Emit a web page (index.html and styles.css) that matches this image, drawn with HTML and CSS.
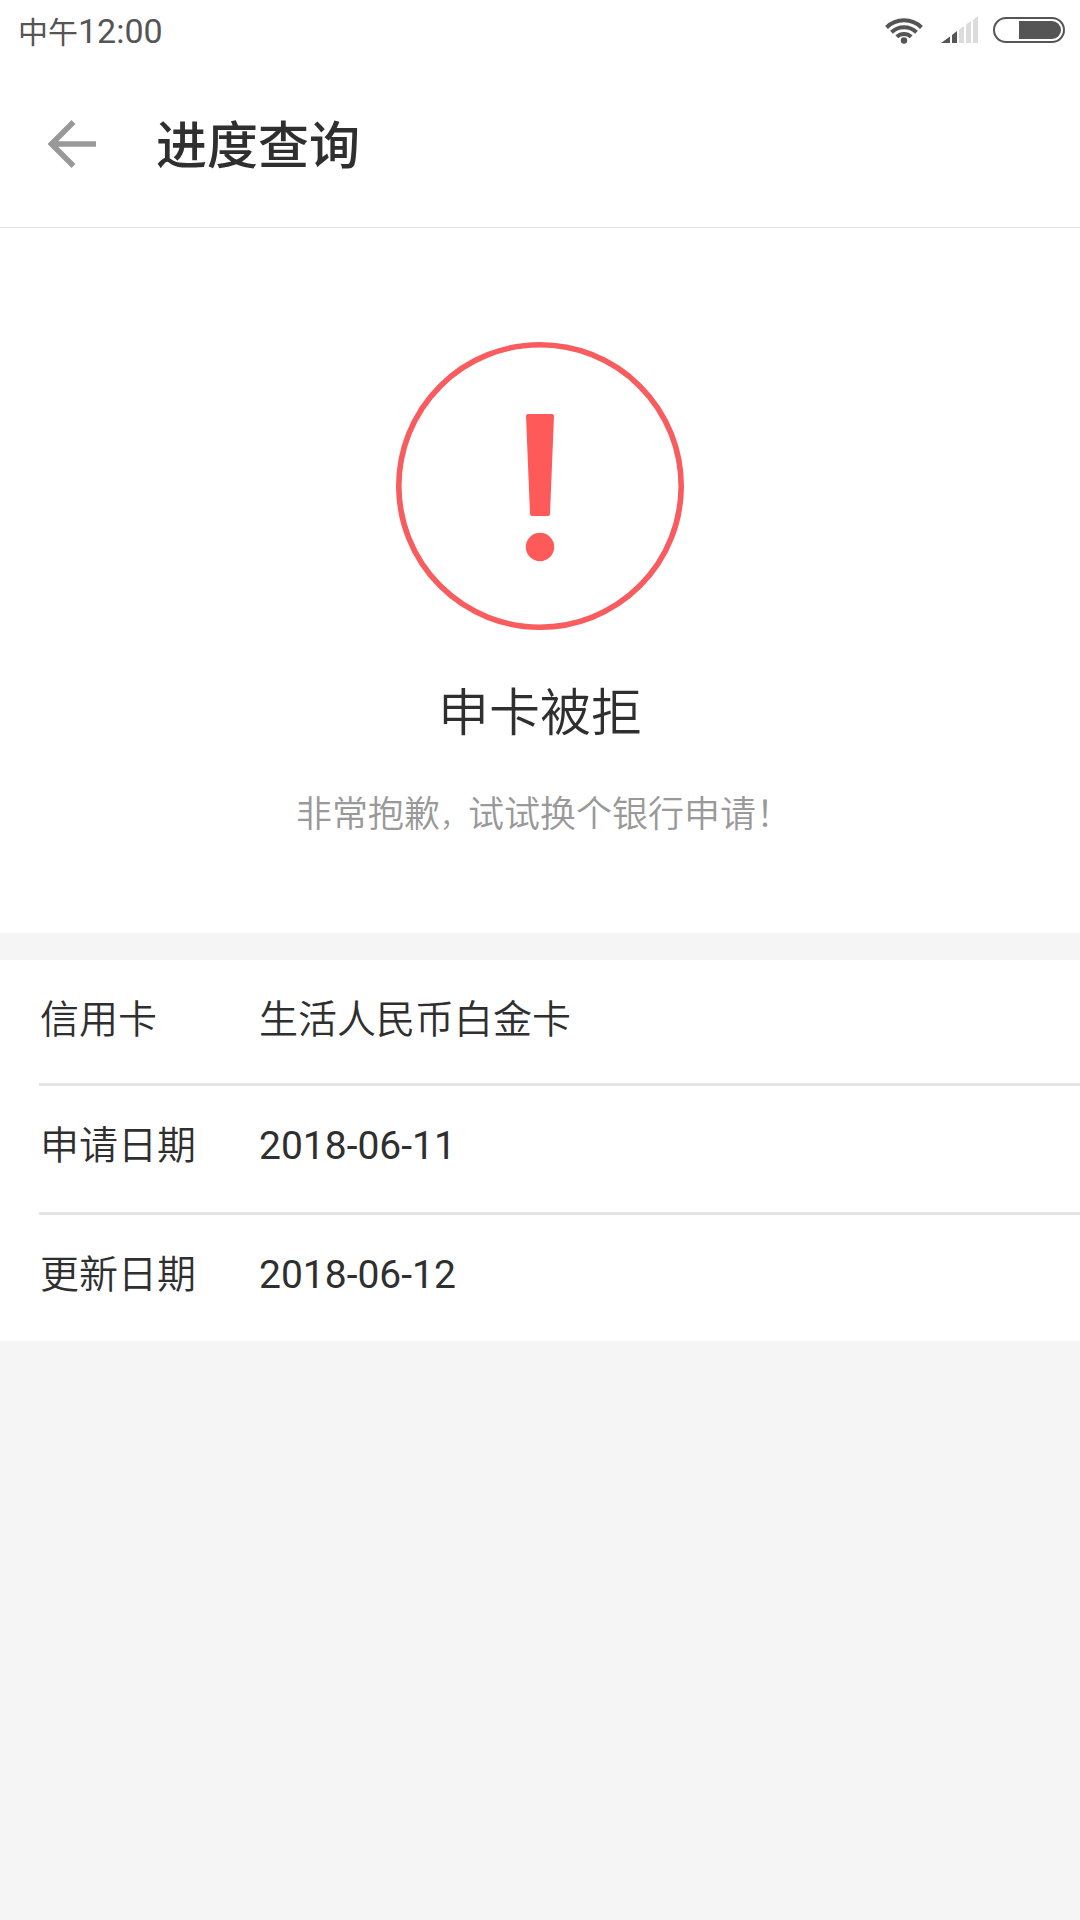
FILE: index.html
```html
<!DOCTYPE html>
<html lang="zh-CN">
<head>
<meta charset="utf-8">
<meta name="viewport" content="width=device-width, initial-scale=1">
<title>进度查询</title>
<link rel="stylesheet" href="styles.css">
</head>
<body>
<div class="status-bar">
  <div class="clock">中午<span class="clock-time">12:00</span></div>
  <div class="status-icons">
    <svg class="icon-wifi" viewBox="0 0 42 28" aria-hidden="true">
      <g fill="none" stroke="#555" stroke-width="4">
        <path d="M1.500 11.500A25 25 0 0 1 36.500 11.500"/>
        <path d="M6.500 16.200A18 18 0 0 1 31.500 16.200"/>
        <path d="M11.800 20.800A10.500 10.500 0 0 1 26.200 20.800"/>
      </g>
      <circle cx="19" cy="24.500" r="3.200" fill="#555"/>
    </svg>
    <svg class="icon-signal" viewBox="0 0 38 28" aria-hidden="true">
      <path fill="#555" d="M0 27L9 20.500V27ZM11 19L16 15V27H11Z"/>
      <path fill="#dcdcdc" d="M18 13.500L23 10V27H18ZM25 8.500L30 5V27H25ZM32 4L37 0V27H32Z"/>
    </svg>
    <svg class="icon-battery" viewBox="0 0 72 28" aria-hidden="true">
      <rect x="1" y="2" width="70" height="24" rx="12" fill="none" stroke="#555" stroke-width="2"/>
      <path fill="#555" d="M26 5H59A9 9 0 0 1 59 23H26Z"/>
    </svg>
  </div>
</div>

<header class="app-bar">
  <button class="back" type="button" aria-label="返回">
    <svg class="icon-back" viewBox="0 0 48 48" aria-hidden="true">
      <path d="M25.500 2L3.500 24L25.500 46M4 24H48" fill="none" stroke="#999" stroke-width="5.500"/>
    </svg>
  </button>
  <h1 class="title">进度查询</h1>
</header>

<main>
  <section class="result">
    <svg class="icon-alert" viewBox="0 0 288 288" aria-hidden="true">
      <circle cx="144" cy="144" r="141.200" fill="none" stroke="#f85c5e" stroke-width="5.600"/>
      <path d="M132 72H156Q158 72 158 74L154 172Q154 174 152 174H136Q134 174 134 172L130 74Q130 72 132 72Z" fill="#ff5a5a"/>
      <circle cx="144" cy="205" r="14.200" fill="#ff5a5a"/>
    </svg>
    <h2 class="result-title">申卡被拒</h2>
    <p class="result-text">非常抱歉<span class="comma">，</span>试试换个银行申请！</p>
  </section>

  <dl class="details">
    <div class="row"><dt>信用卡</dt><dd>生活人民币白金卡</dd></div>
    <div class="row"><dt>申请日期</dt><dd><time datetime="2018-06-11">2018-06-11</time></dd></div>
    <div class="row"><dt>更新日期</dt><dd><time datetime="2018-06-12">2018-06-12</time></dd></div>
  </dl>
</main>
</body>
</html>
```
FILE: styles.css
```css
* {
  box-sizing: border-box;
}

body {
  margin: 0;
  min-height: 100vh;
  background: #f5f5f5;
  color: #2f2f2f;
  font-family: Roboto, "Noto Sans CJK SC", sans-serif;
}

h1, h2, p, dl, dd {
  margin: 0;
}

.status-bar {
  display: flex;
  align-items: center;
  justify-content: space-between;
  height: 60px;
  padding: 0 15px 0 18px;
  background: #fff;
  color: #555;
}

.clock {
  padding-top: 3px;
  font-size: 30px;
  line-height: 40px;
}

.clock-time {
  font-size: 34px;
}

.status-icons {
  display: flex;
  gap: 14px;
}

.status-icons svg {
  display: block;
  height: 28px;
}

.icon-wifi {
  width: 42px;
}

.icon-signal {
  width: 38px;
}

.icon-battery {
  width: 72px;
}

.app-bar {
  display: flex;
  align-items: center;
  gap: 60px;
  height: 168px;
  padding: 0 48px;
  border-bottom: 1px solid #e1e1e1;
  background: #fff;
}

.back {
  padding: 0;
  border: 0;
  background: none;
  cursor: pointer;
}

.icon-back {
  display: block;
  width: 48px;
  height: 48px;
}

.title {
  padding-top: 6px;
  font-size: 51px;
  font-weight: 500;
  line-height: 72px;
}

.result {
  display: flex;
  flex-direction: column;
  align-items: center;
  padding: 114px 40px 90px;
  background: #fff;
}

.icon-alert {
  width: 288px;
  height: 288px;
}

.result-title {
  margin-top: 48px;
  font-size: 51px;
  font-weight: 350;
  line-height: 72px;
}

.result-text {
  margin-top: 40px;
  padding-left: 8px;
  color: #999;
  font-size: 36px;
  font-weight: 350;
  line-height: 50px;
}

.comma {
  font-size: 28px;
}

.details {
  margin-top: 27px;
  padding-left: 39px;
  background: #fff;
  font-size: 39px;
  font-weight: 350;
  line-height: 54px;
}

.details time {
  font-weight: 400;
}

.row {
  display: grid;
  grid-template-columns: 219px 1fr;
  padding: 33px 0 39px 1px;
}

.row:first-child {
  padding-bottom: 36px;
}

.row + .row {
  border-top: 3px solid #e4e4e4;
}
```
